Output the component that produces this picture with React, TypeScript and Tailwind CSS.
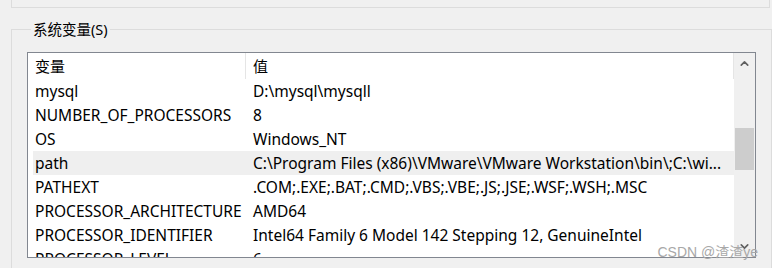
import { ChevronUp, ChevronDown } from 'lucide-react';

const rows: [string, string][] = [
  ['mysql', 'D:\\mysql\\mysqll'],
  ['NUMBER_OF_PROCESSORS', '8'],
  ['OS', 'Windows_NT'],
  ['path', 'C:\\Program Files (x86)\\VMware\\VMware Workstation\\bin\\;C:\\wi...'],
  ['PATHEXT', '.COM;.EXE;.BAT;.CMD;.VBS;.VBE;.JS;.JSE;.WSF;.WSH;.MSC'],
  ['PROCESSOR_ARCHITECTURE', 'AMD64'],
  ['PROCESSOR_IDENTIFIER', 'Intel64 Family 6 Model 142 Stepping 12, GenuineIntel'],
  ['PROCESSOR_LEVEL', '6'],
];

const font = { fontFamily: '"Noto Sans", "Noto Sans CJK SC", sans-serif' };

export default function App() {
  return (
    <div className="h-[268px] w-[772px] overflow-hidden bg-[#f0f0f0] text-[15.5px] text-black relative" style={font}>
      {/* ── previous group box (bottom edge) ───────────────────────────── */}
      <div className="ml-[11px] w-[759px] h-[8px] border-x border-b border-[#dcdcdc]" />

      {/* ── 系统变量 ─────────────────────────────────────────────────────── */}
      <fieldset className="mt-[13px] ml-[11px] w-[759px] h-[260px] border border-[#dcdcdc] px-[15px]">
        <legend className="ml-[4px] px-[2px] text-[14.5px] leading-[17px]">系统变量(S)</legend>

        <div className="mt-[14px] w-[729px] h-[206px] border border-[#828790] bg-white flex overflow-hidden">
          <div className="flex-1 flex flex-col overflow-hidden">
            <div className="flex h-[26px] shrink-0 items-stretch text-[15px]">
              <div className="w-[218px] pl-[7px] pt-[1px] flex items-center border-r border-[#e5e5e5]">变量</div>
              <div className="flex-1 pl-[7px] pt-[1px] flex items-center border-r border-[#e5e5e5]">值</div>
            </div>
            {rows.map(([name, value]) => (
              <div
                key={name}
                className={`flex h-[24px] shrink-0 items-center pt-[2px] ml-[5px] ${name === 'path' ? 'bg-[#efefef]' : ''}`}
              >
                <span className="w-[212px] pl-[2px] whitespace-nowrap overflow-hidden">{name}</span>
                <span className="flex-1 pl-[8px] whitespace-nowrap overflow-hidden">{value}</span>
              </div>
            ))}
          </div>

          {/* scrollbar */}
          <div className="w-[21px] bg-[#f0f0f0] flex flex-col items-center">
            <div className="h-[21px] flex items-center justify-center text-[#606060]">
              <ChevronUp className="h-[13px] w-[13px]" strokeWidth={3} />
            </div>
            <div className="mt-[54px] w-[19px] h-[42px] bg-[#cdcdcd]" />
            <div className="flex-1" />
            <div className="h-[21px] flex items-center justify-center text-[#606060]">
              <ChevronDown className="h-[13px] w-[13px]" strokeWidth={3} />
            </div>
          </div>
        </div>
      </fieldset>

      <div
        className="absolute right-[14px] bottom-[9px] text-[14px] leading-none text-[#a8a8a8]"
        style={{ fontFamily: '"Liberation Sans", "Noto Sans CJK SC", sans-serif' }}
      >
        CSDN @渣渣ye
      </div>
    </div>
  );
}
